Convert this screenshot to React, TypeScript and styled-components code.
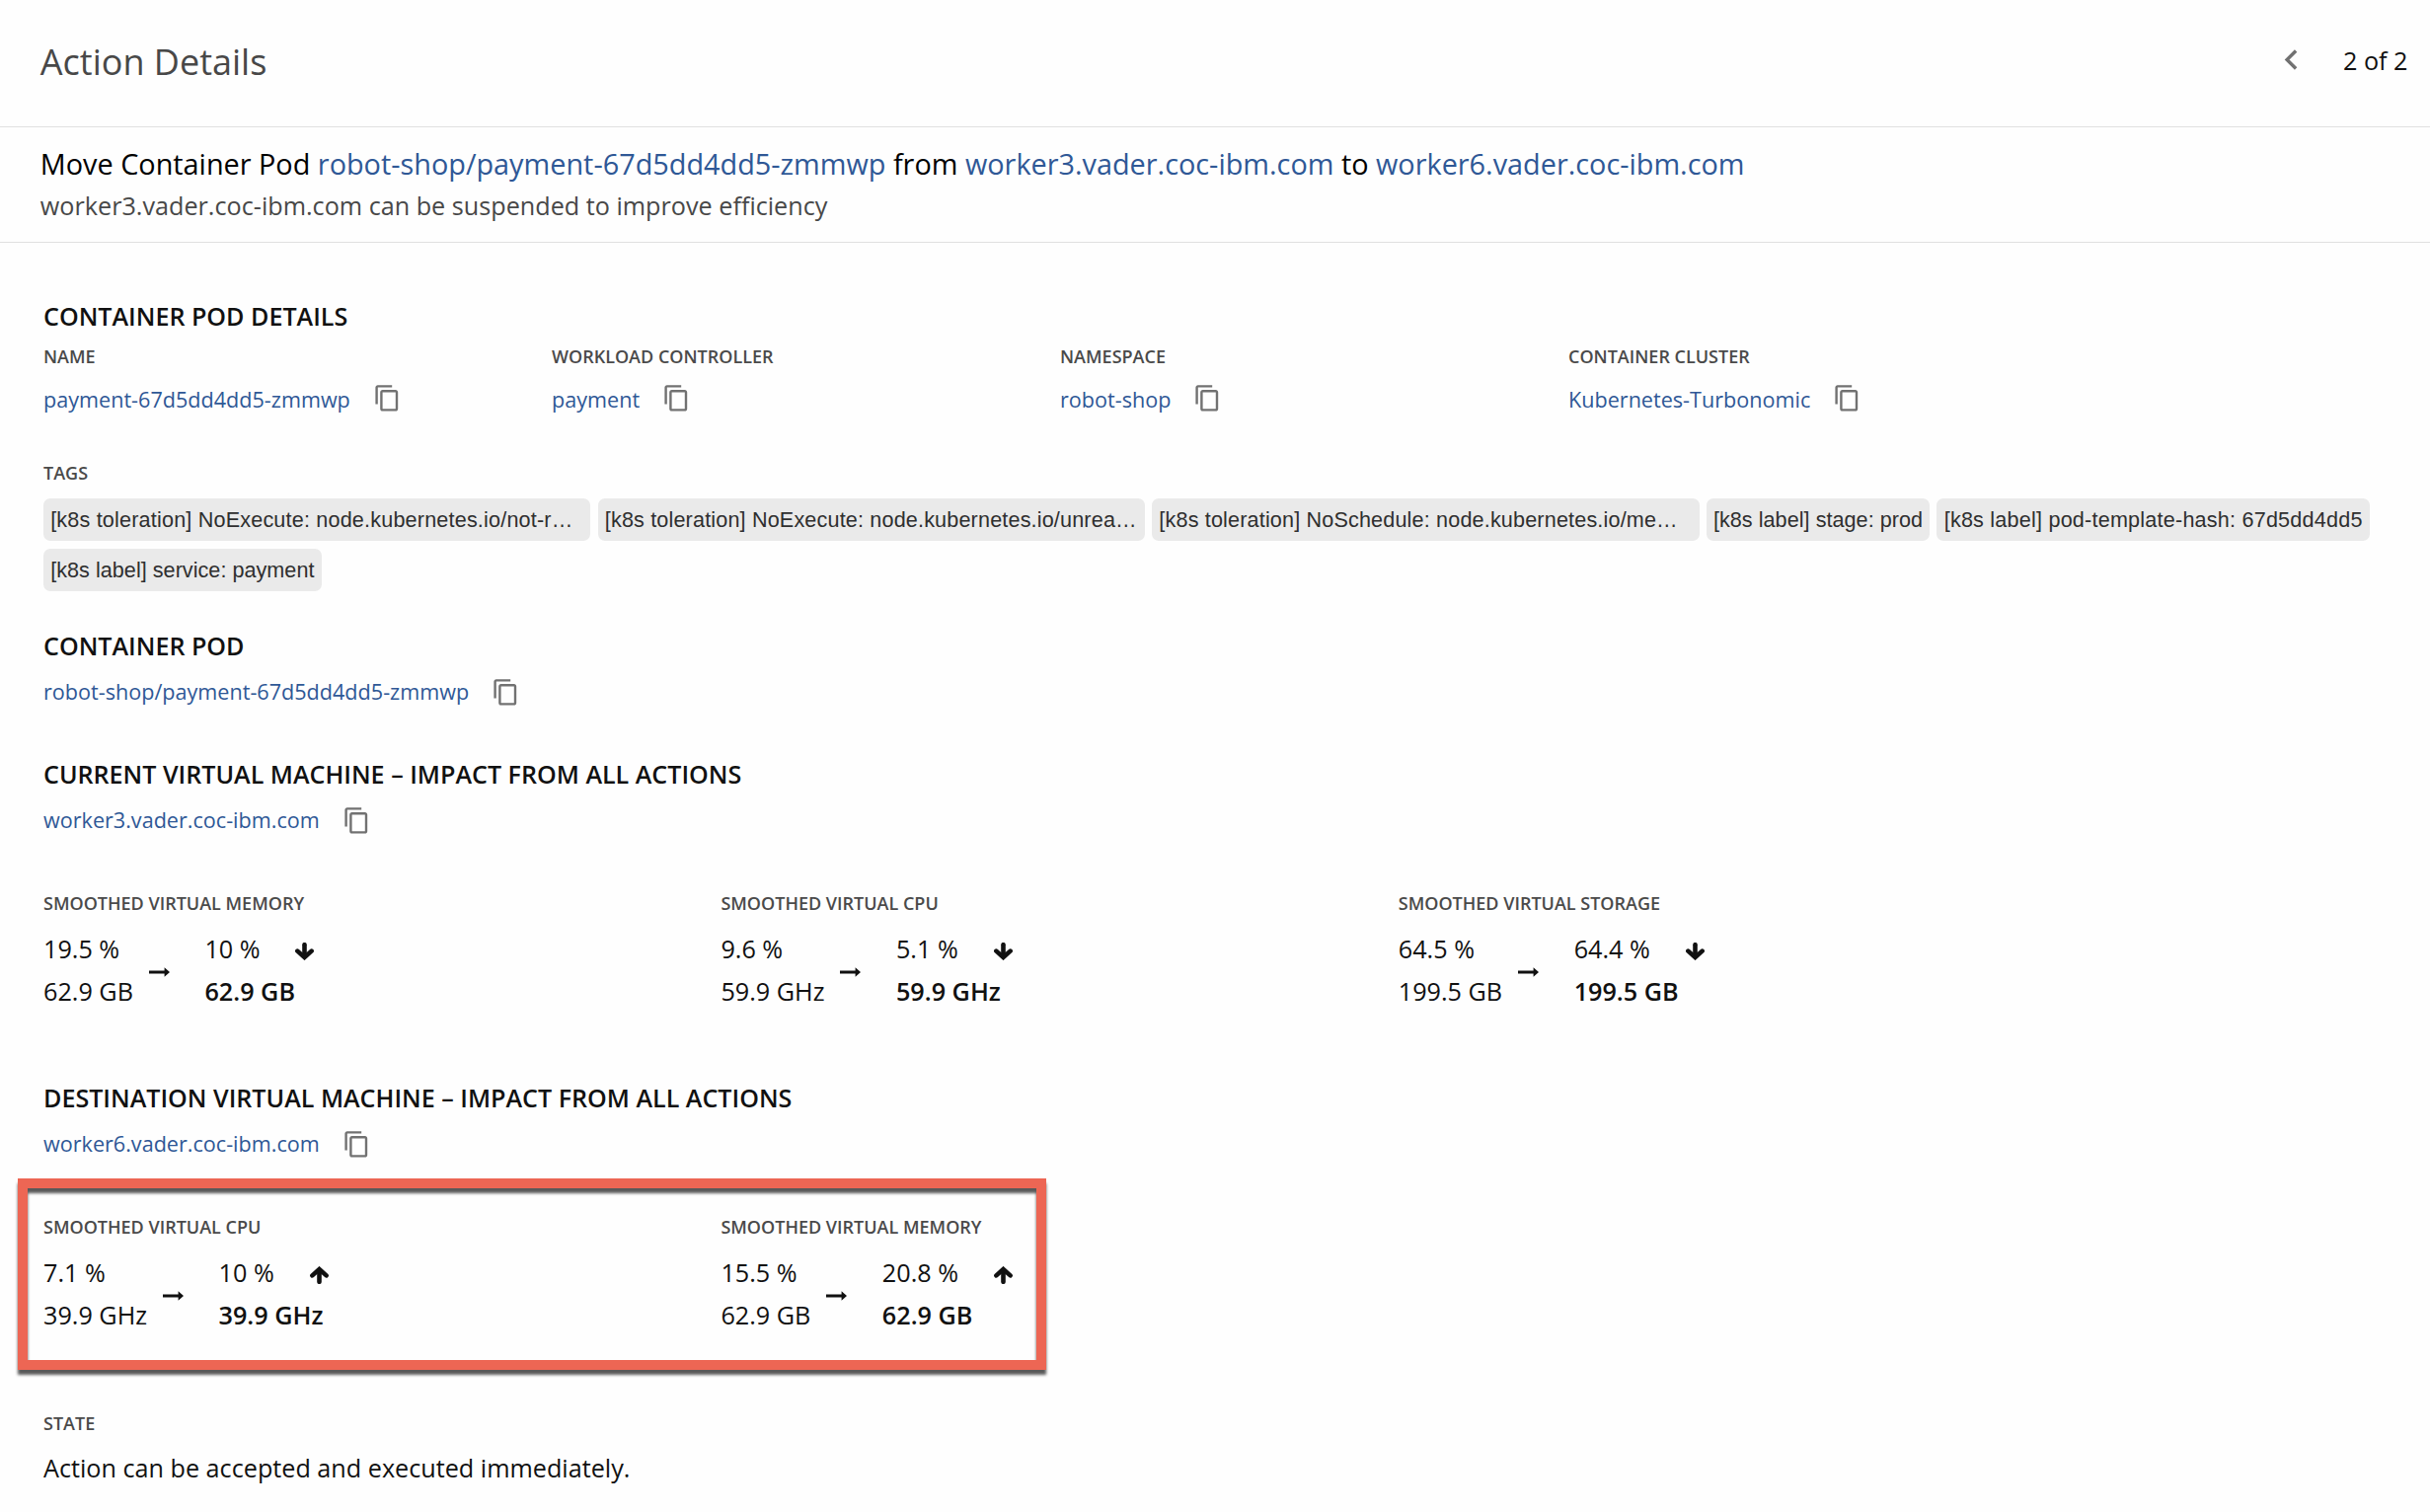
import React from "react";
import styled, { createGlobalStyle } from "styled-components";

const GlobalStyle = createGlobalStyle`
  *, *::before, *::after { box-sizing: border-box; }
  body {
    margin: 0;
    background: #fefefe;
    color: #111;
    font-family: "Open Sans", "Noto Sans", sans-serif;
    font-size: 25.2px;
  }
  h1, h2, p { margin: 0; font-weight: 400; }
`;

const Page = styled.main`
  min-height: 1532px;
  overflow: hidden;
`;

const Header = styled.header`
  display: flex;
  align-items: center;
  justify-content: space-between;
  height: 129px;
  padding: 0 22.5px 3px 40.8px;
  border-bottom: 1px solid #e0e0e0;
`;

const Title = styled.h1`
  font-size: 36px;
  line-height: 48px;
  color: #484848;
`;

const Pager = styled.nav`
  display: flex;
  align-items: center;
  gap: 31.5px;
  padding-bottom: 3px;
  line-height: 36px;
  svg { display: block; margin-top: -2px; color: #717171; }
`;

const Summary = styled.section`
  height: 117px;
  padding: 17px 40.8px 0;
  border-bottom: 1px solid #e0e0e0;
`;

const Headline = styled.h2`
  font-size: 28.83px;
  line-height: 40px;
  color: #000;
`;

const Reason = styled.p`
  margin-top: 2px;
  line-height: 40px;
  color: #484848;
`;

const Link = styled.a`
  color: #2f5896;
  text-decoration: none;
`;

const Content = styled.div`
  padding: 56px 44px 0;
`;

const Section = styled.section<{ $gap?: number }>`
  margin-top: ${(p) => p.$gap ?? 0}px;
`;

const SectionTitle = styled.h2`
  font-size: 25.1px;
  font-weight: 600;
  line-height: 36px;
`;

const Label = styled.div<{ $gap?: number }>`
  margin-top: ${(p) => p.$gap ?? 0}px;
  font-size: 18px;
  font-weight: 600;
  line-height: 24px;
  color: #4a4a4a;
`;

const EntityRow = styled.div<{ $gap: number; $lift: number }>`
  display: flex;
  align-items: center;
  gap: 22.8px;
  height: 30px;
  margin-top: ${(p) => p.$gap}px;
  font-size: 21.6px;
  line-height: 30px;
  svg { display: block; margin-top: ${(p) => -2 * p.$lift}px; color: #717171; }
`;

const FieldGrid = styled.div`
  display: grid;
  grid-template-columns: repeat(4, 515px);
  margin-top: 11px;
`;

const TagList = styled.div`
  display: flex;
  flex-wrap: wrap;
  gap: 8px 7.2px;
  margin-top: 14px;
`;

const Tag = styled.span<{ $clipped?: boolean; $tracking: number }>`
  width: ${(p) => (p.$clipped ? "554.4px" : "auto")};
  height: 43px;
  padding: 0 7.2px;
  border-radius: 7px;
  background: #eaeaea;
  color: #2f2f2f;
  font-family: "Liberation Sans", Arial, sans-serif;
  font-size: 21.6px;
  letter-spacing: ${(p) => p.$tracking}px;
  line-height: 43px;
  white-space: nowrap;
`;

const MetricGrid = styled.div`
  position: relative;
  display: grid;
  grid-template-columns: repeat(3, 686.4px);
  margin-top: 57px;
`;

const Change = styled.div`
  display: flex;
  align-items: center;
  margin-top: 13px;
  line-height: 43px;
`;

const Amount = styled.div<{ $strong?: boolean }>`
  font-weight: ${(p) => (p.$strong ? 600 : 400)};
`;

const ToArrow = styled.svg`
  flex: none;
  margin: 3px 35.5px 0 16px;
`;

const Percent = styled.div`
  display: flex;
  align-items: center;
  gap: 35.8px;
  height: 43px;
`;

const TrendArrow = styled.svg<{ $up?: boolean }>`
  margin-top: 4px;
  transform: ${(p) => (p.$up ? "scaleY(-1)" : "none")};
`;

const Highlight = styled.div`
  position: absolute;
  left: -26px;
  top: -37px;
  width: 1042px;
  height: 194px;
  border: 10px solid #ed6654;
  filter: drop-shadow(0 5px 1.5px rgba(0, 0, 0, 0.65));
  pointer-events: none;
`;

const StateText = styled.p`
  && { margin-top: 15px; }
  line-height: 36px;
`;

const CopyIcon = () => (
  <svg width="28.8" height="28.8" viewBox="0 0 24 24" fill="currentColor">
    <path d="M16 1H4c-1.1 0-2 .9-2 2v14h2V3h12V1zm3 4H8c-1.1 0-2 .9-2 2v14c0 1.1.9 2 2 2h11c1.1 0 2-.9 2-2V7c0-1.1-.9-2-2-2zm0 16H8V7h11v14z" />
  </svg>
);

const ChevronLeft = () => (
  <svg width="41" height="41" viewBox="0 0 24 24" fill="currentColor">
    <path d="M15.41 7.41 14 6l-6 6 6 6 1.41-1.41L10.83 12z" />
  </svg>
);

const Entity = ({ name, gap, lift = 0 }: { name: string; gap: number; lift?: number }) => (
  <EntityRow $gap={gap} $lift={lift}>
    <Link>{name}</Link>
    <CopyIcon />
  </EntityRow>
);

type MetricData = { label: string; from: string; to: string; before: string; after: string; up?: boolean };

const Metric = ({ label, from, to, before, after, up }: MetricData) => (
  <div>
    <Label>{label}</Label>
    <Change>
      <div>
        <div>{from}</div>
        <Amount>{before}</Amount>
      </div>
      <ToArrow width="21" height="10" viewBox="0 0 21 10">
        <path d="M0 3.6H15.6V0.3L21 5L15.6 9.7V6.4H0Z" fill="#111" />
      </ToArrow>
      <div>
        <Percent>
          {to}
          <TrendArrow $up={up} width="19" height="18" viewBox="0 0 19 18">
            <path d="M9.5 2.2V14" stroke="#111" strokeWidth="4.6" strokeLinecap="round" fill="none" />
            <path d="M2.4 8.6L9.5 15L16.6 8.6" stroke="#111" strokeWidth="4.6" strokeLinecap="round" strokeLinejoin="miter" fill="none" />
          </TrendArrow>
        </Percent>
        <Amount $strong>{after}</Amount>
      </div>
    </Change>
  </div>
);

const fields = [
  ["NAME", "payment-67d5dd4dd5-zmmwp"],
  ["WORKLOAD CONTROLLER", "payment"],
  ["NAMESPACE", "robot-shop"],
  ["CONTAINER CLUSTER", "Kubernetes-Turbonomic"],
];

const tags = [
  { text: "[k8s toleration] NoExecute: node.kubernetes.io/not-r…", clipped: true, tracking: 0.18 },
  { text: "[k8s toleration] NoExecute: node.kubernetes.io/unrea…", clipped: true, tracking: 0.16 },
  { text: "[k8s toleration] NoSchedule: node.kubernetes.io/me…", clipped: true, tracking: 0.16 },
  { text: "[k8s label] stage: prod", tracking: 0.04 },
  { text: "[k8s label] pod-template-hash: 67d5dd4dd5", tracking: 0.21 },
  { text: "[k8s label] service: payment", tracking: 0.03 },
];

const currentMetrics: MetricData[] = [
  { label: "SMOOTHED VIRTUAL MEMORY", from: "19.5 %", to: "10 %", before: "62.9 GB", after: "62.9 GB" },
  { label: "SMOOTHED VIRTUAL CPU", from: "9.6 %", to: "5.1 %", before: "59.9 GHz", after: "59.9 GHz" },
  { label: "SMOOTHED VIRTUAL STORAGE", from: "64.5 %", to: "64.4 %", before: "199.5 GB", after: "199.5 GB" },
];

const destinationMetrics: MetricData[] = [
  { label: "SMOOTHED VIRTUAL CPU", from: "7.1 %", to: "10 %", before: "39.9 GHz", after: "39.9 GHz", up: true },
  { label: "SMOOTHED VIRTUAL MEMORY", from: "15.5 %", to: "20.8 %", before: "62.9 GB", after: "62.9 GB", up: true },
];

export default function App() {
  return (
    <Page>
      <GlobalStyle />
      <Header>
        <Title>Action Details</Title>
        <Pager>
          <ChevronLeft />
          <span>2 of 2</span>
        </Pager>
      </Header>
      <Summary>
        <Headline>
          Move Container Pod <Link>robot-shop/payment-67d5dd4dd5-zmmwp</Link> from{" "}
          <Link>worker3.vader.coc-ibm.com</Link> to <Link>worker6.vader.coc-ibm.com</Link>
        </Headline>
        <Reason>worker3.vader.coc-ibm.com can be suspended to improve efficiency</Reason>
      </Summary>
      <Content>
        <Section>
          <SectionTitle>CONTAINER POD DETAILS</SectionTitle>
          <FieldGrid>
            {fields.map(([label, value]) => (
              <div key={label}>
                <Label>{label}</Label>
                <Entity name={value} gap={17} lift={1.5} />
              </div>
            ))}
          </FieldGrid>
          <Label $gap={47}>TAGS</Label>
          <TagList>
            {tags.map((t) => (
              <Tag key={t.text} $clipped={t.clipped} $tracking={t.tracking}>{t.text}</Tag>
            ))}
          </TagList>
        </Section>
        <Section $gap={37}>
          <SectionTitle>CONTAINER POD</SectionTitle>
          <Entity name="robot-shop/payment-67d5dd4dd5-zmmwp" gap={14} />
        </Section>
        <Section $gap={50}>
          <SectionTitle>CURRENT VIRTUAL MACHINE – IMPACT FROM ALL ACTIONS</SectionTitle>
          <Entity name="worker3.vader.coc-ibm.com" gap={14} />
          <MetricGrid>
            {currentMetrics.map((m) => <Metric key={m.label} {...m} />)}
          </MetricGrid>
        </Section>
        <Section $gap={68}>
          <SectionTitle>DESTINATION VIRTUAL MACHINE – IMPACT FROM ALL ACTIONS</SectionTitle>
          <Entity name="worker6.vader.coc-ibm.com" gap={14} />
          <MetricGrid>
            {destinationMetrics.map((m) => <Metric key={m.label} {...m} />)}
            <Highlight />
          </MetricGrid>
        </Section>
        <Section $gap={76}>
          <Label>STATE</Label>
          <StateText>Action can be accepted and executed immediately.</StateText>
        </Section>
      </Content>
    </Page>
  );
}
